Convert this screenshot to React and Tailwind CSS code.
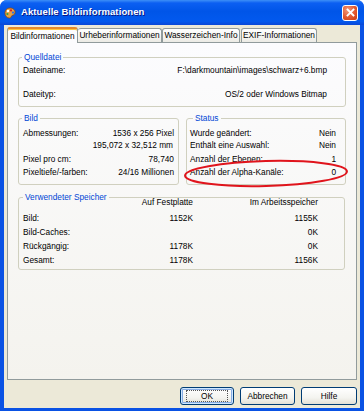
import React from "react";

function Row({ l, r, className = "" }) {
  return (
    <div className={"flex justify-between h-[12px] leading-[12px] whitespace-nowrap " + className}>
      <span>{l}</span>
      <span>{r}</span>
    </div>
  );
}

function MemRow({ a, b, c, className = "" }) {
  return (
    <div className={"flex h-[14px] leading-[14px] whitespace-nowrap " + className}>
      <span className="w-[100px]">{a}</span>
      <span className="w-[70px] text-right">{b}</span>
      <span className="w-[125px] text-right">{c}</span>
    </div>
  );
}

function Btn({ children, w, def }) {
  return (
    <div
      className={
        "h-[18px] rounded-[3px] border border-[#003c74] flex items-center justify-center bg-[linear-gradient(180deg,#ffffff_0%,#f4f4f0_60%,#e3e0d6_100%)] " +
        w +
        (def ? " shadow-[inset_0_0_0_1px_#cee7ff,inset_0_0_0_2px_#89ade4]" : "")
      }
    >
      {def ? (
        <span className="border border-dotted border-[#555] px-[14px] leading-[10px] h-[12px]">{children}</span>
      ) : (
        <span className="leading-[10px]">{children}</span>
      )}
    </div>
  );
}

export default function App() {
  return (
    <div className="relative w-[364px] h-[411px] bg-[#0a52e4] rounded-t-[7px] overflow-hidden flex flex-col font-['Liberation_Sans',Arial,sans-serif] text-[8.3px] text-black">
      {/* Title bar */}
      <div className="h-[25px] flex items-center bg-[linear-gradient(180deg,#3d8ff7_0%,#0c5ff2_12%,#0055e8_45%,#0259ee_85%,#0a47d6_100%)] pl-[4px] pr-[6px]">
        <svg width="12" height="12" viewBox="0 0 12 12" className="shrink-0">
          <path d="M6 1 C9.5 1 11.5 3.5 11 6 C10.6 8 9 8 8 8.5 C7 9 7.5 11 5.5 11 C2.5 11 0.8 8.5 1 5.5 C1.2 3 3.2 1 6 1 Z" fill="#e6a146" stroke="#8a4a14" strokeWidth="0.8" />
          <circle cx="4" cy="4" r="1.2" fill="#ffffff" />
          <circle cx="7" cy="3.4" r="1.1" fill="#e02020" />
          <circle cx="9" cy="5.6" r="1.1" fill="#2a6ee8" />
          <circle cx="3.4" cy="7" r="1.1" fill="#2ea040" />
        </svg>
        <span className="ml-[5px] text-white font-bold text-[9.5px] [text-shadow:1px_1px_#0a1883] tracking-[0.1px]">
          Aktuelle Bildinformationen
        </span>
        <div className="ml-auto w-[16px] h-[16px] rounded-[3px] border border-white bg-[radial-gradient(circle_at_35%_30%,#f39a7c_0%,#e2582e_55%,#c43a14_100%)] flex items-center justify-center">
          <svg width="9" height="9" viewBox="0 0 9 9">
            <path d="M1.5 1.5 L7.5 7.5 M7.5 1.5 L1.5 7.5" stroke="#ffffff" strokeWidth="1.8" strokeLinecap="square" />
          </svg>
        </div>
      </div>

      {/* Client */}
      <div className="flex-1 mx-[4px] mb-[3px] bg-[#ece9d8] flex flex-col px-[3px]">
        {/* Tabs */}
        <div className="h-[17px] pt-[2px] flex items-end">
          <div className="relative z-10 -mb-px h-[16px] w-[71px] rounded-t-[3px] border border-b-0 border-[#919b9c] border-t-2 border-t-[#e68b2c] bg-[#fcfcfe] shadow-[inset_0_1px_0_#ffc73c] flex items-center justify-center whitespace-nowrap">
            Bildinformationen
          </div>
          <div className="h-[14px] w-[84px] rounded-t-[3px] border border-b-0 border-l-0 border-[#919b9c] bg-[linear-gradient(180deg,#ffffff,#ecebe5)] flex items-center justify-center whitespace-nowrap">
            Urheberinformationen
          </div>
          <div className="h-[14px] w-[78px] rounded-t-[3px] border border-b-0 border-[#919b9c] bg-[linear-gradient(180deg,#ffffff,#ecebe5)] flex items-center justify-center whitespace-nowrap">
            Wasserzeichen-Info
          </div>
          <div className="ml-px h-[14px] w-[76px] rounded-t-[3px] border border-b-0 border-[#919b9c] bg-[linear-gradient(180deg,#ffffff,#ecebe5)] flex items-center justify-center whitespace-nowrap">
            EXIF-Informationen
          </div>
        </div>

        {/* Panel */}
        <div className="h-[338px] border border-[#919b9c] bg-[linear-gradient(180deg,#fcfcfe,#f4f3ee)] px-[10px] pt-[9px]">
          <fieldset className="border border-[#d0d0bf] rounded-[3px]">
            <legend className="ml-[3px] px-[2px] leading-[10px] text-[#0046d5]">Quelldatei</legend>
            <div className="pt-[3px] pb-[7px] pl-[4px] pr-[18px]">
              <div className="flex justify-between h-[10px] leading-[10px] whitespace-nowrap">
                <span>Dateiname:</span>
                <span>F:\darkmountain\images\schwarz+6.bmp</span>
              </div>
              <div className="flex justify-between h-[10px] leading-[10px] mt-[14px] whitespace-nowrap">
                <span>Dateityp:</span>
                <span>OS/2 oder Windows Bitmap</span>
              </div>
            </div>
          </fieldset>

          <div className="flex gap-[7px] mt-[6px]">
            <fieldset className="w-[161px] border border-[#d0d0bf] rounded-[3px]">
              <legend className="ml-[3px] px-[2px] leading-[10px] text-[#0046d5]">Bild</legend>
              <div className="pt-[4px] pb-[6px] pl-[4px] pr-[4px]">
                <Row l="Abmessungen:" r="1536 x 256 Pixel" />
                <div className="h-[12px] leading-[12px] text-right pr-px">195,072 x 32,512 mm</div>
                <Row l="Pixel pro cm:" r="78,740" className="mt-[2px]" />
                <Row l="Pixeltiefe/-farben:" r="24/16 Millionen" className="mt-[1px]" />
              </div>
            </fieldset>
            <fieldset className="flex-1 border border-[#d0d0bf] rounded-[3px]">
              <legend className="ml-[6px] px-[2px] leading-[10px] text-[#0046d5]">Status</legend>
              <div className="pt-[4px] pb-[6px] pl-[3px] pr-[9px]">
                <Row l="Wurde geändert:" r="Nein" />
                <Row l="Enthält eine Auswahl:" r="Nein" />
                <Row l="Anzahl der Ebenen:" r="1" className="mt-[2px]" />
                <Row l="Anzahl der Alpha-Kanäle:" r="0" className="mt-[1px]" />
              </div>
            </fieldset>
          </div>

          <fieldset className="mt-[7px] mr-px border border-[#d0d0bf] rounded-[3px]">
            <legend className="ml-[4px] px-[2px] leading-[10px] text-[#0046d5]">Verwendeter Speicher</legend>
            <div className="pl-[4px] pb-[2px]">
              <MemRow a="" b="Auf Festplatte" c="Im Arbeitsspeicher" className="-mt-[7px]" />
              <MemRow a="Bild:" b="1152K" c="1155K" className="mt-[2px]" />
              <MemRow a="Bild-Caches:" b="" c="0K" />
              <MemRow a="Rückgängig:" b="1178K" c="0K" />
              <MemRow a="Gesamt:" b="1178K" c="1156K" />
            </div>
          </fieldset>
        </div>

        {/* Buttons */}
        <div className="mt-[7px] flex justify-end gap-[6px]">
          <Btn w="w-[54px]" def>OK</Btn>
          <Btn w="w-[55px]">Abbrechen</Btn>
          <Btn w="w-[56px]">Hilfe</Btn>
        </div>
      </div>

      {/* Red annotation ellipse */}
      <svg className="absolute left-[180px] top-[156px] pointer-events-none" width="174" height="36" viewBox="0 0 174 36">
        <ellipse cx="86" cy="17.5" rx="81" ry="12.5" fill="none" stroke="#e0141c" strokeWidth="2" transform="rotate(-1.5 86 17.5)" />
      </svg>
    </div>
  );
}
